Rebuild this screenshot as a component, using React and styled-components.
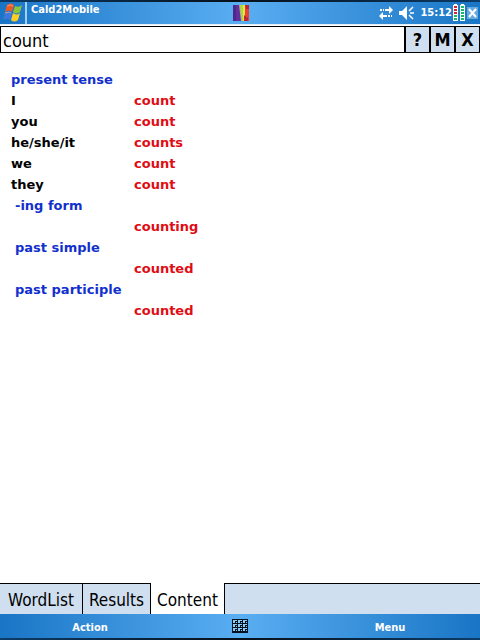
import React from "react";
import styled, { createGlobalStyle } from "styled-components";

const GlobalStyle = createGlobalStyle`
  * { box-sizing: border-box; }
  body {
    margin: 0;
    background: #fff;
    color: #000;
    font-family: "DejaVu Sans Condensed", "DejaVu Sans", Tahoma, sans-serif;
  }
  button, input { font-family: inherit; color: inherit; border-radius: 0; }
`;

const Screen = styled.div`
  display: flex;
  flex-direction: column;
  min-height: 100vh;
`;

const StatusBar = styled.header`
  display: grid;
  grid-template-columns: 1fr auto 1fr;
  align-items: center;
  height: 25px;
  padding: 2px 1px 1px 2px;
  color: #fff;
  background:
    linear-gradient(90deg, #0c3c68, #07101a 50%, #0c3c68) top / 100% 2px no-repeat,
    linear-gradient(#e3eef8, #e3eef8) bottom / 100% 1px no-repeat,
    linear-gradient(90deg, #1975c5, #5aaef2 50%, #1975c5);
`;

const StatusGroup = styled.div`
  display: flex;
  align-items: center;
  justify-content: ${(p) => (p.$end ? "flex-end" : "flex-start")};
`;

const IconButton = styled.button`
  display: flex;
  padding: 0;
  border: 0;
  background: none;
`;

const Divider = styled.span`
  width: 2px;
  height: 22px;
  margin: 0 4px 0 1px;
  background: #9fd0f5;
`;

const AppTitle = styled.h1`
  margin: 0 0 7px;
  font-size: 11px;
  line-height: 14px;
`;

const Clock = styled.time`
  margin: 0 1px 0 5px;
  font-size: 11px;
  font-weight: bold;
  line-height: 16px;
`;

const SearchRow = styled.form`
  display: flex;
  height: 27px;
  margin-top: 1px;
  border: solid #000;
  border-width: 1px 0 1px 1px;
`;

const SearchInput = styled.input`
  flex: 1;
  min-width: 0;
  padding: 2px 1px 0 2px;
  border: 0;
  outline: 0;
  background: #fff;
  font-size: 18px;
`;

const ToolButton = styled.button`
  width: 25px;
  padding: 0;
  border: 0;
  border-left: 2px solid #000;
  background: #cfdfef;
  font-size: 18px;
  font-weight: bold;
  line-height: 24px;

  &:last-child { width: 26px; border-right: 1px solid #000; }
`;

const Content = styled.main`
  flex: 1;
  padding: 16px 11px;
`;

const Forms = styled.table`
  border-collapse: collapse;
  font-family: "DejaVu Sans", Verdana, sans-serif;
  font-size: 13px;
  font-weight: bold;
  line-height: 21px;
`;

const Heading = styled.th`
  padding: 0 0 0 ${(p) => (p.$indent ? "4px" : "0")};
  color: #1230cc;
  text-align: left;
`;

const Pronoun = styled.th`
  width: 123px;
  height: 21px;
  padding: 0;
  text-align: left;
`;

const Form = styled.td`
  padding: 0;
  color: #e00c14;
`;

const Tabs = styled.nav`
  display: flex;
  height: 31px;
`;

const Tab = styled.button`
  width: ${(p) => p.$width};
  padding: 2px 0 0;
  border: solid ${(p) => (p.$active ? "#fff" : "#000")};
  border-width: 1px ${(p) => (p.$active ? "0" : "1px")} 0 0;
  background: ${(p) => (p.$active ? "#fff" : "#cfdfef")};
  font-size: 17px;
  line-height: 28px;
  white-space: nowrap;
`;

const TabFill = styled.div`
  flex: 1;
  border: solid #000;
  border-width: 1px 0 0 1px;
  background: #cfdfef;
`;

const CommandBar = styled.footer`
  display: grid;
  grid-template-columns: 1fr 16px 1fr;
  align-items: center;
  height: 26px;
  padding-bottom: 2px;
  color: #fff;
  background:
    linear-gradient(90deg, #0c3c68, #07101a 50%, #0c3c68) bottom / 100% 2px no-repeat,
    linear-gradient(90deg, #1975c5, #5aaef2 50%, #1975c5);
`;

const Command = styled.button`
  padding: ${(p) => (p.$end ? "3px 0 0 52px" : "3px 52px 0 0")};
  border: 0;
  background: none;
  font-size: 11px;
  font-weight: bold;
  line-height: 20px;
  text-align: center;
`;

const FlagIcon = () => (
  <svg width="22" height="22" viewBox="0 0 22 22">
    <path d="M5 3q4-3 7 0l-2 7q-3-3-7 0z" fill="#ef5b24" />
    <path d="M13 4q4 2 7-1l-2 7q-4 3-7 0z" fill="#8bc63c" />
    <path d="M3 11q4-3 7 0l-2 7q-3-3-7 0z" fill="#3f78dc" />
    <path d="M11 11q4 3 7 0l-2 7q-4 3-7 0z" fill="#ffce25" />
    <path d="M5 4q4-2 6 0M3 11q4-2 6 0" fill="none" stroke="#ffb38c" opacity=".7" />
  </svg>
);

const BookIcon = () => (
  <svg width="16" height="16" viewBox="0 0 16 16">
    <path d="M0 0h7l2 16H0z" fill="#60309c" />
    <path d="M0 0h3v16H0z" fill="#51278b" />
    <path d="M6 0h2l2 16H8z" fill="#b8a4b0" />
    <path d="M7 0h4v16H9z" fill="#a5e02d" />
    <path d="M10 0h2v16h-2z" fill="#ece052" />
    <path d="M12 0h4v16h-4z" fill="#ed402b" />
    <path d="M12 0h4v4h-3zM11 10l4 3v3h-4z" fill="#bd2438" />
  </svg>
);

const SyncIcon = () => (
  <svg width="16" height="14" viewBox="0 0 16 14" fill="#fff">
    <path d="M11 0l4 4-4 4V5H7V3h4zM5 3h1v2H5zM2 3h2v2H2zM5 6v3h4v2H5v3l-4-4zM10 9h2v2h-2zM13 9h1v2h-1z" />
  </svg>
);

const SpeakerIcon = () => (
  <svg width="16" height="14" viewBox="0 0 16 14">
    <path d="M0 5h3l5-5v14L3 9H0z" fill="#fff" />
    <path d="M10 5l4-4M11 7h4M10 9l4 4" fill="none" stroke="#fff" strokeWidth="1.5" />
  </svg>
);

const BatteryIcon = () => (
  <svg width="12" height="18" viewBox="0 0 12 18">
    <path d="M1 0h3v1h1v16H0V1h1zM8 0h3v1h1v16H7V1h1z" fill="#fff" />
    <path d="M1 2h3v2H1zM1 5h3v2H1zM1 8h3v2H1z" fill="#d92635" />
    <path d="M1 11h3v2H1zM1 14h3v2H1zM8 2h3v2H8zM8 5h3v2H8zM8 8h3v2H8zM8 11h3v2H8zM8 14h3v2H8z" fill="#18b968" />
  </svg>
);

const CloseIcon = () => (
  <svg width="14" height="18" viewBox="0 0 14 18">
    <path d="M2 3h11v12H2z" fill="#68abdf" />
    <path d="M4 5l7 8M11 5l-7 8" stroke="#fff" strokeWidth="2" />
  </svg>
);

const KeyboardIcon = () => (
  <svg width="16" height="14" viewBox="0 0 16 14">
    <path d="M0 0h16v14H0z" fill="#051220" />
    {[1, 6, 11].map((x) =>
      [1, 5, 9].map((y) => (
        <path key={`${x}-${y}`} d={`M${x} ${y}h4v1h-2v2h-2zM${x + 3} ${y + 2}h1v1h-1z`} fill="#8bcaf5" />
      ))
    )}
  </svg>
);

const SpeakerButton = styled(IconButton)`
  margin-left: 5px;
`;

const sections = [
  {
    title: "present tense",
    rows: [["I", "count"], ["you", "count"], ["he/she/it", "counts"], ["we", "count"], ["they", "count"]],
  },
  { title: "-ing form", indent: true, rows: [["", "counting"]] },
  { title: "past simple", indent: true, rows: [["", "counted"]] },
  { title: "past participle", indent: true, rows: [["", "counted"]] },
];

export default function App() {
  return (
    <Screen>
      <GlobalStyle />
      <StatusBar>
        <StatusGroup>
          <IconButton aria-label="Start"><FlagIcon /></IconButton>
          <Divider />
          <AppTitle>Cald2Mobile</AppTitle>
        </StatusGroup>
        <BookIcon />
        <StatusGroup $end>
          <IconButton aria-label="Connections"><SyncIcon /></IconButton>
          <SpeakerButton aria-label="Volume"><SpeakerIcon /></SpeakerButton>
          <Clock>15:12</Clock>
          <BatteryIcon />
          <IconButton aria-label="Close"><CloseIcon /></IconButton>
        </StatusGroup>
      </StatusBar>
      <SearchRow onSubmit={(e) => e.preventDefault()}>
        <SearchInput aria-label="Search word" defaultValue="count" />
        <ToolButton type="button">?</ToolButton>
        <ToolButton type="button">M</ToolButton>
        <ToolButton type="button">X</ToolButton>
      </SearchRow>
      <Content>
        <Forms>
          {sections.map(({ title, indent, rows }) => (
            <tbody key={title}>
              <tr><Heading colSpan={2} $indent={indent}>{title}</Heading></tr>
              {rows.map(([pronoun, form]) => (
                <tr key={pronoun}>
                  <Pronoun scope="row">{pronoun}</Pronoun>
                  <Form>{form}</Form>
                </tr>
              ))}
            </tbody>
          ))}
        </Forms>
      </Content>
      <Tabs>
        <Tab $width="83px">WordList</Tab>
        <Tab $width="68px">Results</Tab>
        <Tab $width="73px" $active aria-current="page">Content</Tab>
        <TabFill />
      </Tabs>
      <CommandBar>
        <Command>Action</Command>
        <IconButton aria-label="Keyboard"><KeyboardIcon /></IconButton>
        <Command $end>Menu</Command>
      </CommandBar>
    </Screen>
  );
}
